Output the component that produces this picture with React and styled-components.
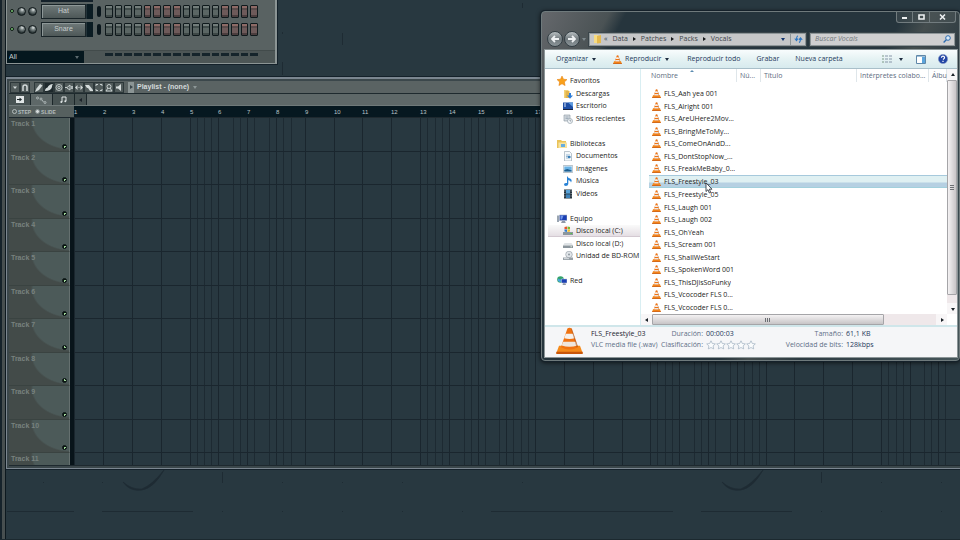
import React, { useState } from 'react';
import styled, { createGlobalStyle, css } from 'styled-components';

const GlobalStyle = createGlobalStyle`
    * {
        box-sizing: border-box;
        margin: 0;
        padding: 0;
    }
    body {
        background-color: #283840;
        overflow: hidden;
    }
    button, input, select {
        font: inherit;
        color: inherit;
        border: none;
        background: none;
    }
    a {
        color: inherit;
        text-decoration: none;
    }
    svg {
        display: block;
        flex-shrink: 0;
    }
`;

/* ---------- desktop ---------- */

const Desktop = styled.div`
    position: relative;
    display: flex;
    min-height: 100vh;
    background-color: #283840;
    border-bottom: 1px solid #1c292f;
    font-family: "Liberation Sans", Arial, sans-serif;
    font-size: 7px;
    line-height: 10px;
    overflow: hidden;
`;

const LeftEdge = styled.div`
    width: 6px;
    flex-shrink: 0;
    background-color: #474f50;
    border-left: 2px solid #16232b;
    border-right: 1px solid #0d191f;
    z-index: 1;
`;

const Workspace = styled.main`
    position: relative;
    flex: 1;
    min-width: 0;
`;

const WallpaperSvg = styled.svg`
    position: absolute;
    left: 0;
    top: 0;
`;

/* ---------- channel rack ---------- */

const Rack = styled.section`
    position: relative;
    width: 271px;
    background-color: #596262;
    border: solid #8b9494;
    border-width: 0 2px 1px 1px;
    outline: 1px solid #14212a;
    margin-bottom: 13px;
`;

const RackBody = styled.div`
    height: 51px;
    padding-left: 3px;
    border-bottom: 1px solid #424b4b;
`;

const HiddenChannel = styled.div`
    width: 52px;
    height: 2px;
    margin-left: 31px;
    background-color: #14212a;
`;

const ChannelRow = styled.div`
    display: flex;
    align-items: center;
    height: 18px;
`;

const ChannelLed = styled.button`
    width: 4px;
    height: 4px;
    margin-right: 3px;
    border-radius: 50%;
    background-color: #7fd07a;
    border: 1px solid #0c1613;
`;

const Knob = styled.span`
    width: 9px;
    height: 9px;
    margin-right: 2px;
    border-radius: 50%;
    border: 1px solid #11191b;
    background: radial-gradient(circle at 60% 25%, #dfe4e4 0, #7d8787 30%, #2c3738 70%);
`;

const ChannelName = styled.button`
    width: 45px;
    height: 15px;
    margin-left: 2px;
    color: #c6cdcd;
    background: linear-gradient(#6f7979, #4e5858);
    border: 1px solid #1a2529;
    box-shadow: inset 1px 1px 0 #8d9797;
`;

const ChannelMeter = styled.span`
    width: 7px;
    height: 15px;
    background: linear-gradient(90deg, #24343a 1px, #0b1c23 1px);
`;

const ChannelPan = styled.span`
    width: 4px;
    height: 11px;
    margin: 0 4px;
    border-radius: 2px;
    background-color: #0a161c;
`;

const Steps = styled.div`
    display: flex;
    gap: 2px;
    width: 153px;
`;

const Step = styled.button`
    flex: 1;
    height: 13px;
    border: 1px solid #0f191c;
    border-radius: 1px;
    background: ${({ $accent }) => $accent
        ? 'linear-gradient(#8d6a66 0 2px, #5b4b4b 2px 4px, #6e5a5a 4px 9px, #4b3d3e 9px)'
        : 'linear-gradient(#737d7b 0 2px, #414c4b 2px 4px, #5b6664 4px 9px, #3d4746 9px)'};
`;

const RackFooter = styled.div`
    display: flex;
    height: 12px;
    background-color: #4d5656;
`;

const FilterWrap = styled.label`
    display: flex;
    align-items: center;
    width: 77px;
    padding-right: 4px;
    color: #c6cdcd;
    background-color: #05171e;
`;

const FilterSelect = styled.select`
    flex: 1;
    padding-left: 2px;
    appearance: none;
`;

const StepMarks = styled(Steps)`
    height: 3px;
    margin: 2px 0 0 21px;
    span {
        flex: 1;
        background-color: #15242b;
    }
`;

/* ---------- playlist ---------- */

const PlaylistWindow = styled.section`
    position: relative;
    border: solid #7b8690;
    border-width: 2px 0 1px 1px;
    outline: 1px solid #14212a;
    padding: 2px 0 2px 2px;
    background-color: #3b474b;
`;

const PlaylistBar = styled.header`
    display: flex;
    align-items: center;
    height: 13px;
    padding-left: 1px;
    background-color: #5a6363;
    border-bottom: 1px solid #1e2a2e;
`;

const ToolButton = styled.button`
    width: 10px;
    height: 11px;
    color: #d3dada;
    border: 1px solid #2d383a;
    background-color: ${({ $active }) => ($active ? '#1e292c' : '#515b5b')};
    svg {
        width: 8px;
        height: 9px;
    }
`;

const ToolGroup = styled.div`
    display: flex;
    margin-right: ${({ $gap }) => $gap}px;
`;

const TitleGrip = styled.span`
    display: flex;
    align-items: center;
    justify-content: center;
    width: 6px;
    height: 11px;
    margin-right: 3px;
    background-color: #8b9595;
`;

const PlaylistTitle = styled.h1`
    font-size: 7px;
    font-weight: bold;
    color: #d5dbdb;
    margin-right: 3px;
`;

const TabBar = styled.div`
    display: flex;
    height: 12px;
    background-color: #5e6868;
    border-bottom: 1px solid #6f7979;
`;

const TabButton = styled.button`
    display: flex;
    align-items: center;
    justify-content: center;
    width: ${({ $narrow }) => ($narrow ? 12 : 22)}px;
    border-right: 1px solid #1c272a;
    color: ${({ $active }) => ($active ? '#aeb7b7' : '#e1e6e6')};
    background-color: ${({ $active }) => ($active ? '#5e6868' : '#485353')};
`;

const RulerRow = styled.div`
    display: flex;
    height: 11px;
    background-color: #061820;
`;

const ModeBox = styled.div`
    display: flex;
    align-items: center;
    gap: 4px;
    width: 65px;
    flex-shrink: 0;
    padding-left: 3px;
    font-size: 5px;
    font-weight: bold;
    color: #b4bcbc;
    background-color: #56605f;
    label {
        display: flex;
        align-items: center;
        gap: 1px;
    }
    input {
        appearance: none;
        width: 5px;
        height: 5px;
        border: 1px solid #b4bcbc;
        border-radius: 50%;
    }
    input:checked {
        background-color: #d5dbdb;
        border-color: #818b8b;
    }
`;

const barWidth = css`
    flex-shrink: 0;
    width: 29px;
    &:nth-child(5n) {
        width: 28px;
    }
`;

const Numbers = styled.div`
    display: flex;
    align-items: center;
    flex: 1;
    min-width: 0;
    overflow: hidden;
    font-size: 6px;
    color: #b9c3c6;
    span {
        ${barWidth}
    }
`;

const PlaylistBody = styled.div`
    display: flex;
    height: 349px;
    border-top: 1px solid #1e292f;
    border-bottom: 1px solid #1e292f;
    background-color: #283840;
    overflow: hidden;
`;

const trackHeight = css`
    flex-shrink: 0;
    height: 34px;
    &:nth-child(even) {
        height: 33px;
    }
`;

const TrackList = styled.ul`
    display: flex;
    flex-direction: column;
    width: 65px;
    flex-shrink: 0;
    list-style: none;
    border-right: 4px solid #08141a;
`;

const TrackHead = styled.li`
    ${trackHeight}
    display: flex;
    flex-direction: column;
    justify-content: space-between;
    padding: 1px 2px 2px;
    font-weight: bold;
    color: #78827f;
    border-bottom: 1px solid #3a4341;
    background: radial-gradient(ellipse 40px 30px at 62px 2px, #4c5a59 0 95%, #434b49 100%);
    border-right: 1px solid #65706f;
`;

const TrackLed = styled.button`
    align-self: flex-end;
    width: 5px;
    height: 5px;
    border: 1px solid #0a1412;
    border-radius: 50%;
    background: radial-gradient(circle, #9fd89a 0 1px, #0a1412 1px);
`;

const Grid = styled.div`
    display: grid;
    flex: 1;
    min-width: 0;
    overflow: hidden;
`;

const Bars = styled.div`
    grid-area: 1 / 1;
    display: flex;
    min-width: 0;
`;

const Bar = styled.div`
    ${barWidth}
    display: flex;
    border-left: 1px solid #1a262e;
`;

const Beat = styled.span`
    flex: 1;
    border-left: 1px solid ${({ $hidden }) => ($hidden ? 'transparent' : '#1d2a32')};
    &:first-child {
        border-left: none;
    }
`;

const Lanes = styled.div`
    grid-area: 1 / 1;
    display: flex;
    flex-direction: column;
    min-width: 0;
`;

const Lane = styled.div`
    ${trackHeight}
    border-bottom: 1px solid #1a262e;
`;

/* ---------- explorer ---------- */

const ExplorerWindow = styled.section`
    position: absolute;
    left: 541px;
    top: 11px;
    right: 0;
    display: flex;
    flex-direction: column;
    padding: 0 2px 3px 3px;
    border: 1px solid #6f7a7c;
    border-radius: 4px;
    background: linear-gradient(118deg, #65686c 0, #4a5254 60px, #26353d 75px, #26353d 320px, #444d4e 345px, #2c3a41 390px, #46565a 100%);
    box-shadow: 0 0 0 1px #15212a, 0 1px 4px 1px rgba(0, 0, 0, 0.6);
    font-family: "Open Sans", "Segoe UI", sans-serif;
    font-size: 7px;
    line-height: 12px;
    color: #1c1c22;
`;

const CaptionRow = styled.div`
    display: flex;
    justify-content: flex-end;
    height: 18px;
    padding-right: 1px;
`;

const CaptionButton = styled.button`
    display: flex;
    align-items: center;
    justify-content: center;
    width: ${({ $wide }) => ($wide ? 26 : 17)}px;
    height: 11px;
    color: #eef1f2;
    border: 1px solid #727c7f;
    border-width: 0 1px 1px 0;
    background-color: rgba(80, 90, 92, 0.4);
    &:first-child {
        border-left-width: 1px;
        border-bottom-left-radius: 3px;
    }
    &:last-child {
        border-bottom-right-radius: 3px;
    }
`;

const AddressRow = styled.div`
    display: flex;
    align-items: center;
    height: 20px;
    padding: 0 2px 2px;
`;

const NavButton = styled.button`
    width: 16px;
    height: 16px;
    margin-right: 1px;
    border-radius: 50%;
    border: 1px solid #343f45;
    background: linear-gradient(#b9c0c3, #70797d 50%, #8a9498);
    svg {
        margin: 0 auto;
    }
`;

const AddressBar = styled.nav`
    display: flex;
    align-items: center;
    flex: 1;
    min-width: 0;
    height: 13px;
    margin: 0 4px 0 2px;
    padding-left: 3px;
    color: #3d4448;
    background-color: #c6c7c8;
    border: 1px solid #8e9698;
    outline: 1px solid #3a454a;
`;

const Crumb = styled.a`
    margin-left: 5px;
    &:first-of-type {
        margin-left: 2px;
    }
`;

const CrumbArrow = styled.span`
    width: 0;
    margin-left: 5px;
    border: solid transparent;
    border-width: 2px 0 2px 3px;
    border-left-color: #16191b;
`;

const Refresh = styled.button`
    display: flex;
    align-items: center;
    justify-content: center;
    width: 15px;
    height: 11px;
    margin-left: 4px;
    border-left: 1px solid #8e9698;
`;

const SearchBox = styled.label`
    display: flex;
    align-items: center;
    width: 145px;
    height: 13px;
    padding: 0 3px 0 4px;
    background-color: #cfcfd0;
    border: 1px solid #8e9698;
    outline: 1px solid #3a454a;
    input {
        flex: 1;
        min-width: 0;
        font-style: italic;
        outline: none;
    }
    input::placeholder {
        color: #73797c;
    }
`;

const Client = styled.div`
    background-color: #fff;
    outline: 1px solid #8b9597;
`;

const CommandBar = styled.div`
    display: flex;
    align-items: center;
    height: 19px;
    padding: 0 9px 0 11px;
    color: #1e395b;
    background: linear-gradient(#f8fcfd, #e5f2f3 50%, #d7eaee);
    border-bottom: 1px solid #a9bfc9;
`;

const Command = styled.button`
    display: flex;
    align-items: center;
    margin-right: ${({ $gap = 16 }) => $gap}px;
    gap: 3px;
`;

const Spacer = styled.span`
    flex: 1;
`;

const Down = styled.span`
    width: 0;
    margin: 1px 1px 0;
    border: solid transparent;
    border-width: 3px 2px 0;
    border-top-color: ${({ $color = '#1e2c40' }) => $color};
`;

const Panes = styled.div`
    display: flex;
    height: 256px;
`;

const Sidebar = styled.ul`
    width: 96px;
    flex-shrink: 0;
    padding: 6px 0 0 3px;
    list-style: none;
    border-right: 1px solid #d9eef2;
    overflow: hidden;
`;

const SideItem = styled.li`
    height: 12px;
    &:nth-child(even) {
        height: 13px;
    }
    a {
        display: flex;
        align-items: center;
        gap: 3px;
        height: 100%;
        padding-left: ${({ $child }) => ($child ? 15 : 9)}px;
        white-space: nowrap;
        ${({ $selected }) => $selected && css`
            background: linear-gradient(#fafafa, #e5dfe4);
            border-bottom: 1px solid #d3c9d1;
        `}
    }
`;

const ListPane = styled.div`
    display: grid;
    grid-template-columns: 1fr 10px;
    grid-template-rows: 1fr 11px;
    flex: 1;
    min-width: 0;
`;

const TableWrap = styled.div`
    padding-left: 8px;
    overflow: hidden;
`;

const FileTable = styled.table`
    width: 100%;
    table-layout: fixed;
    border-collapse: collapse;
    th {
        height: 18px;
        padding: 1px 0 5px 3px;
        font-weight: normal;
        text-align: left;
        color: #5d6c80;
        white-space: nowrap;
        overflow: hidden;
        text-overflow: ellipsis;
        background: linear-gradient(#dfe6ea, #dfe6ea) right top / 1px 13px no-repeat;
    }
    th:first-child {
        padding-left: 2px;
        text-overflow: clip;
    }
    th:last-child {
        text-overflow: clip;
    }
`;

const FileRow = styled.tr`
    height: 13px;
    line-height: 11px;
    cursor: default;
    &:nth-child(even) {
        height: 12px;
    }
    &:nth-child(8) {
        height: 13px;
    }
    td {
        height: inherit;
        ${({ $selected }) => $selected && css`
            background: linear-gradient(#dff0f2 0 7px, #b6d0e2 8px);
            box-shadow: inset 0 1px 0 #a6c9dc, inset 0 -1px 0 #a2d0dc;
        `}
    }
    div {
        display: flex;
        align-items: center;
        gap: 3px;
        height: 12px;
        padding-left: 3px;
    }
    span {
        overflow: hidden;
        text-overflow: ellipsis;
        white-space: nowrap;
    }
`;

const SortMark = styled.span`
    display: block;
    width: 0;
    height: 0;
    margin: 0 0 -2px 39px;
    border: solid transparent;
    border-width: 0 2px 2px;
    border-bottom-color: #5b8bb0;
`;

const Scroll = styled.div`
    display: flex;
    flex-direction: ${({ $vertical }) => ($vertical ? 'column' : 'row')};
    background-color: #efe8ea;
`;

const ScrollArrow = styled.button`
    display: flex;
    align-items: center;
    justify-content: center;
    width: 11px;
    height: 11px;
    flex-shrink: 0;
    background-color: #f8f6f7;
    svg {
        transform: rotate(${({ $turn = 0 }) => $turn}deg);
    }
`;

const Thumb = styled.div`
    display: flex;
    align-items: center;
    justify-content: center;
    flex: ${({ $size }) => $size};
    border: 1px solid #a5a5a8;
    border-radius: 1px;
    background: linear-gradient(${({ $vertical }) => ($vertical ? '90deg' : '180deg')}, #f4f2f3, #c8c5c7);
    svg {
        transform: rotate(${({ $vertical }) => ($vertical ? 90 : 0)}deg);
    }
`;

const Track = styled.span`
    flex: ${({ $size }) => $size};
`;

const Details = styled.footer`
    display: flex;
    height: 32px;
    padding-left: 11px;
    background-color: #f5f6f8;
    border-top: 2px solid #cfe6ea;
`;

const FileSummary = styled.div`
    width: 69px;
    margin: 1px 0 0 8px;
    line-height: 11px;
    white-space: nowrap;
    color: #5e6f87;
    strong {
        display: block;
        font-weight: normal;
        color: #1c2430;
    }
`;

const Facts = styled.dl`
    display: grid;
    grid-template-columns: ${({ $label }) => $label}px auto;
    grid-auto-rows: 11px;
    column-gap: 3px;
    align-content: start;
    margin: 1px 0 0;
    line-height: 11px;
    white-space: nowrap;
    dt {
        text-align: right;
        color: #5e6f87;
    }
    dd {
        display: flex;
        align-items: center;
        color: #1e395b;
    }
`;

const Star = styled.button`
    width: 10px;
    height: 10px;
`;

const Cursor = styled.svg`
    position: absolute;
    left: 705px;
    top: 182px;
`;

/* ---------- icons ---------- */

const Cone = ({ size = 9 }) => (
    <svg width={size} height={size} viewBox="0 0 18 18">
        <path d="M2 12.500h14l1.800 5H.2z" fill="#f58a1a" />
        <path d="M.2 16.500h17.600V18H.2z" fill="#c9560a" />
        <path d="M7.600 1q1.400-1 2.800 0l4.300 12.500q-5.700 3-11.400 0z" fill="#f07312" />
        <path d="M6.500 4.500h5l1 3q-3.500 1-7 0z" fill="#f6f1ec" />
        <path d="M4.700 9.800h8.600l.9 2.500q-5.200 1.800-10.400 0z" fill="#efe6dc" />
        <path d="M10 1l3.700 12.500 1-.4L10.600 1z" fill="#a84a0c" opacity=".5" />
    </svg>
);

const sideIcons = {
    star: <path d="M5 0l1.500 3.200 3.500.4-2.600 2.400.7 3.600L5 7.800 1.900 9.600l.7-3.600L0 3.600l3.500-.4z" fill="#f9a01b" stroke="#e27a08" strokeWidth=".5" />,
    download: <><path d="M1 1h4l1 1v7H1z" fill="#f3d377" /><path d="M2.500 2h4v7h-4z" fill="#e4b54c" /><path d="M6 4h2v2.500h2L7 9.800 4 6.500h2z" fill="#2f7ed8" /></>,
    desktop: <><path d="M0 1.500h10v7.500H0z" fill="#1f4fa5" /><path d="M5 1.500h5V6z" fill="#5d9be0" /><path d="M1 2.500h2v1H1zM1 4.500h2v1H1z" fill="#dbe8fa" /><path d="M0 8h10v1H0z" fill="#1a2440" /></>,
    recent: <><path d="M1 1h6v6H1z" fill="#d4dbe0" stroke="#8695a0" strokeWidth=".6" /><path d="M2.500 3h3M2.500 4.500h3" stroke="#7f92a3" strokeWidth=".6" /><circle cx="7" cy="7" r="2.500" fill="#f2f6f9" stroke="#8695a0" strokeWidth=".6" /><path d="M7 5.600V7h1.200" stroke="#456" strokeWidth=".5" fill="none" /></>,
    library: <><path d="M0 1h4l1 1h4v7H0z" fill="#eac35a" /><path d="M1.500 3.500H10V9H1.500z" fill="#f7e3a0" /><path d="M4 5h4v3H4z" fill="#67aee0" /></>,
    document: <><path d="M1.500.5h5l2 2V10h-7z" fill="#f6f9fb" stroke="#8fa0ad" strokeWidth=".6" /><path d="M3 4h4M3 5.500h2M3 7h4" stroke="#6f9cc0" strokeWidth=".7" /><path d="M5 5h2.500v2H5z" fill="#3a7fb8" /></>,
    image: <><path d="M.3 1.500h9.400v7H.3z" fill="#f2f5f7" stroke="#8fa0ad" strokeWidth=".6" /><path d="M1.300 2.500h7.400v5H1.300z" fill="#69b3e6" /><path d="M1.300 7.500V6l3-1 4.400 1.500v1z" fill="#1c5c8d" /></>,
    music: <path d="M4 0q1 2 3.500 2.800Q9.500 4 8 6.500 8 4.500 5.300 4v4q-.3 2-2.500 2Q.8 9.800 1 8.200 1.500 6.600 4 7z" fill="#2a83d6" />,
    video: <><path d="M1 .5h8v9H1z" fill="#26343f" /><path d="M3 1h4v3.600H3z" fill="#58a2d8" /><path d="M3 5.400h4V9H3z" fill="#3d82b8" /><path d="M1.500 1.500h.8v1h-.8zM1.500 4h.8v1h-.8zM1.500 6.500h.8v1h-.8zM7.700 1.500h.8v1h-.8zM7.700 4h.8v1h-.8zM7.700 6.500h.8v1h-.8z" fill="#c7d0d6" /></>,
    computer: <><path d="M0 1.500h2V8H0z" fill="#9aa5b1" /><path d="M2.500 1H10v5.500H2.500z" fill="#1b3fb3" stroke="#aab4c4" strokeWidth=".6" /><path d="M3.500 1.500h3L5 5.500H3.500z" fill="#6f94ea" /><path d="M5 7h3l.8 2H4z" fill="#8f99a8" /></>,
    system: <><path d="M0 6h10v3H0z" fill="#8c969d" /><path d="M7.500 7h1.500v1H7.500z" fill="#4fd03c" /><path d="M1.500 1L4 .6v2.600H1.500z" fill="#e8552d" /><path d="M4.500.5L7 1v2.200H4.500z" fill="#7dba32" /><path d="M1.500 3.600H4V6L1.500 5.600z" fill="#2f7dd4" /><path d="M4.500 3.600H7v2L4.500 6z" fill="#f4bd23" /></>,
    drive: <><path d="M1.500 4h7L10 6.500H0z" fill="#dfe3e6" /><path d="M0 6.500h10V9H0z" fill="#8c969d" /><path d="M7.500 7.300h1.500v1H7.500z" fill="#d9e9d5" /></>,
    disc: <><circle cx="6" cy="3.500" r="3.300" fill="#e2e6ea" stroke="#8d979f" strokeWidth=".6" /><circle cx="6" cy="3.500" r="1" fill="#8d979f" /><path d="M0 6.500h10V9H0z" fill="#98a1a8" /><path d="M1 7.300h5v.8H1z" fill="#e6eaec" /></>,
    network: <><circle cx="3.500" cy="3.500" r="3.300" fill="#35a36b" /><path d="M1 2.500q2.500 2 5-.5v3Q3.500 7 1 5z" fill="#4aa5e6" /><path d="M4.500 3H10v4H4.500z" fill="#1b3fb3" stroke="#c0c9d6" strokeWidth=".5" /><path d="M6 7.300h2.500L9 9H5.500z" fill="#8f99a8" /></>,
};

const SideIcon = ({ name }) => (
    <svg width="10" height="10" viewBox="0 0 10 10">{sideIcons[name]}</svg>
);

const toolIcons = [
    <path d="M0 9l1.500-3.500L5 1l2.500 1.500L4 7z" fill="currentColor" />,
    <path d="M0 8q0-3 2.500-3.500Q4 1 8 1 7 2 7 4 6 8 0 8z M5 2v2" fill="currentColor" />,
    <g fill="none" stroke="currentColor" strokeWidth=".8"><circle cx="4" cy="4.500" r="3" /><circle cx="4" cy="4.500" r="1.200" /></g>,
    <g fill="none" stroke="currentColor" strokeWidth=".9"><path d="M0 4.500h2L5 2v5L2 5" /><path d="M6 3l2 3M8 3L6 6" /></g>,
    <path d="M0 4.500L2.500 2v5zM8 4.500L5.500 2v5zM3.500 4h1v1h-1z" fill="currentColor" />,
    <path d="M0 2h4l4 5v1H5L3 5H2z" fill="currentColor" />,
    <path d="M1 3V1.500h2M5 1.500h2V3M7 6v1.500H5M3 7.500H1V6" fill="none" stroke="currentColor" strokeWidth=".9" />,
    <g fill="none" stroke="currentColor" strokeWidth=".9"><circle cx="4" cy="3.500" r="2" /><path d="M1 8l2-3M7 8L5 5M1 8h6" /></g>,
    <path d="M1 3.500h2L6 1v7L3 5.500H1z" fill="currentColor" />,
];

const Wallpaper = () => (
    <WallpaperSvg width="954" height="540" viewBox="6 0 954 540" fill="none" stroke="#1e2b33">
        {[123, 722].map((x) => (
            <path key={x} d={`M${x} 482q9 8 19 7q10-4 22-19q-10 18-22 20q-12 2-19-8z`} fill="#1e2b33" strokeWidth=".7" />
        ))}
        <path d="M7 511.500h67M102 511.500h91M491 511.500h182M701 511.500h91" />
        <path d="M222.500 472v11M821.500 472v11M282.500 62v13M342.500 33v12M282.500 32v2M522.500 3v5" />
        <path d="M43 482.500h1M102 482.500h1M282 482.500h1M342 482.500h1M402 482.500h1M522 482.500h1M881 482.500h1M941 482.500h1M222 511.500h1M282 511.500h1M342 511.500h1M402 511.500h1M462 511.500h1M821 511.500h1M881 511.500h1M941 511.500h1" />
    </WallpaperSvg>
);

const MiniArrow = () => (
    <svg width="4" height="4" viewBox="0 0 4 4"><path d="M3 0v4L0 2z" fill="#1b2228" /></svg>
);

const Grip = () => (
    <svg width="6" height="4" viewBox="0 0 6 4"><path d="M.5 0v4M2.500 0v4M4.500 0v4" stroke="#6c6f73" /></svg>
);

/* ---------- data ---------- */

const channels = ['Hat', 'Snare'];
const tracks = Array.from({ length: 11 }, (_, i) => `Track ${i + 1}`);
const bars = Array.from({ length: 31 }, (_, i) => i + 1);
const numberedBars = bars.slice(0, 17);

const sideEntries = [
    { icon: 'star', text: 'Favoritos' },
    { icon: 'download', text: 'Descargas', child: true },
    { icon: 'desktop', text: 'Escritorio', child: true },
    { icon: 'recent', text: 'Sitios recientes', child: true },
    null,
    { icon: 'library', text: 'Bibliotecas' },
    { icon: 'document', text: 'Documentos', child: true },
    { icon: 'image', text: 'Imágenes', child: true },
    { icon: 'music', text: 'Música', child: true },
    { icon: 'video', text: 'Vídeos', child: true },
    null,
    { icon: 'computer', text: 'Equipo' },
    { icon: 'system', text: 'Disco local (C:)', child: true, selected: true },
    { icon: 'drive', text: 'Disco local (D:)', child: true },
    { icon: 'disc', text: 'Unidad de BD-ROM', child: true },
    null,
    { icon: 'network', text: 'Red' },
];

const files = [
    'FLS_Aah yea 001', 'FLS_Alright 001', 'FLS_AreUHere2Mov...', 'FLS_BringMeToMy...',
    'FLS_ComeOnAndD...', 'FLS_DontStopNow_...', 'FLS_FreakMeBaby_0...', 'FLS_Freestyle_03',
    'FLS_Freestyle_05', 'FLS_Laugh 001', 'FLS_Laugh 002', 'FLS_OhYeah', 'FLS_Scream 001',
    'FLS_ShallWeStart', 'FLS_SpokenWord 001', 'FLS_ThisDJisSoFunky', 'FLS_Vcocoder FLS 0...',
    'FLS_Vcocoder FLS 0...',
];

// every second group of four bars shows its beats
const isDense = (bar) => Math.floor((bar - 1) / 4) % 2 === 1;

const beatHidden = (bar, beat) => {
    const pos = ((bar - 1) % 4) * 4 + beat;
    return pos === 5 || pos === 10 || (pos === 15 && bar < 9);
};

/* ---------- parts ---------- */

function ChannelRack() {
    return (
        <Rack>
            <RackBody>
                <HiddenChannel />
                {channels.map((name) => (
                    <ChannelRow key={name}>
                        <ChannelLed aria-label={`${name} on`} />
                        <Knob />
                        <Knob />
                        <ChannelName>{name}</ChannelName>
                        <ChannelMeter />
                        <ChannelPan />
                        <Steps>
                            {Array.from({ length: 16 }, (_, i) => (
                                <Step key={i} $accent={Math.floor(i / 4) % 2 === 1} aria-label={`${name} ${i + 1}`} />
                            ))}
                        </Steps>
                    </ChannelRow>
                ))}
            </RackBody>
            <RackFooter>
                <FilterWrap>
                    <FilterSelect aria-label="Filter">
                        <option>All</option>
                    </FilterSelect>
                    <Down $color="#5d6a6e" />
                </FilterWrap>
                <StepMarks>
                    {Array.from({ length: 16 }, (_, i) => <span key={i} />)}
                </StepMarks>
            </RackFooter>
        </Rack>
    );
}

function Playlist() {
    return (
        <PlaylistWindow>
            <PlaylistBar>
                <ToolGroup $gap={4}>
                    <ToolButton aria-label="Menu">
                        <svg viewBox="0 0 8 9"><path d="M2 3.500h4L4 6z" fill="currentColor" /></svg>
                    </ToolButton>
                    <ToolButton aria-label="Snap">
                        <svg viewBox="0 0 8 9"><path d="M2 8V4q0-2 2-2t2 2v4" fill="none" stroke="currentColor" strokeWidth="1.500" /></svg>
                    </ToolButton>
                </ToolGroup>
                <ToolGroup $gap={4}>
                    {toolIcons.map((icon, i) => (
                        <ToolButton key={i} $active={i === 1} aria-label={`Tool ${i + 1}`}>
                            <svg viewBox="0 0 8 9">{icon}</svg>
                        </ToolButton>
                    ))}
                </ToolGroup>
                <TitleGrip>
                    <svg width="3" height="4" viewBox="0 0 3 4"><path d="M0 0l3 2-3 2z" fill="#39454a" /></svg>
                </TitleGrip>
                <PlaylistTitle>Playlist - (none)</PlaylistTitle>
                <Down $color="#8d9797" />
            </PlaylistBar>
            <TabBar>
                <TabButton aria-label="Clips">
                    <svg width="8" height="7" viewBox="0 0 8 7"><path d="M0 0h8v7H0z" fill="currentColor" /><path d="M1 3h2.500V1.500L6 3.500 3.500 5.500V4H1z" fill="#1c272a" /></svg>
                </TabButton>
                <TabButton $active aria-label="Automation">
                    <svg width="11" height="8" viewBox="0 0 11 8" fill="none" stroke="currentColor"><circle cx="1.500" cy="2" r="1" /><circle cx="5" cy="3" r="1" /><path d="M6 4l1.500 2" /><circle cx="9" cy="6.500" r="1" /></svg>
                </TabButton>
                <TabButton aria-label="Notes">
                    <svg width="7" height="7" viewBox="0 0 7 7"><path d="M2 6V1h4v4" fill="none" stroke="currentColor" /><circle cx="1.300" cy="6" r="1" fill="currentColor" /><circle cx="5.300" cy="5.300" r="1" fill="currentColor" /></svg>
                </TabButton>
                <TabButton $narrow aria-label="Scroll left"><MiniArrow /></TabButton>
            </TabBar>
            <RulerRow>
                <ModeBox>
                    <label><input type="radio" name="mode" />STEP</label>
                    <label><input type="radio" name="mode" defaultChecked />SLIDE</label>
                </ModeBox>
                <Numbers>
                    {numberedBars.map((n) => <span key={n}>{n}</span>)}
                </Numbers>
            </RulerRow>
            <PlaylistBody>
                <TrackList>
                    {tracks.map((name) => (
                        <TrackHead key={name}>
                            {name}
                            <TrackLed aria-label={`${name} on`} />
                        </TrackHead>
                    ))}
                </TrackList>
                <Grid>
                    <Bars>
                        {bars.map((bar) => (
                            <Bar key={bar}>
                                {isDense(bar) && [0, 1, 2, 3].map((beat) => (
                                    <Beat key={beat} $hidden={beatHidden(bar, beat)} />
                                ))}
                            </Bar>
                        ))}
                    </Bars>
                    <Lanes>
                        {tracks.map((name) => <Lane key={name} />)}
                    </Lanes>
                </Grid>
            </PlaylistBody>
        </PlaylistWindow>
    );
}

function AddressLine() {
    return (
        <AddressRow>
            <NavButton aria-label="Atrás">
                <svg width="10" height="10" viewBox="0 0 10 10"><path d="M9 5H2M5 2L2 5l3 3" fill="none" stroke="#eef1f3" strokeWidth="1.800" /></svg>
            </NavButton>
            <NavButton aria-label="Adelante">
                <svg width="10" height="10" viewBox="0 0 10 10"><path d="M1 5h7M5 2l3 3-3 3" fill="none" stroke="#eef1f3" strokeWidth="1.800" /></svg>
            </NavButton>
            <Down $color="#7e898d" />
            <AddressBar>
                <svg width="9" height="10" viewBox="0 0 9 10"><path d="M1 1h4v8H1z" fill="#f6dc84" /><path d="M4 2l4-1v8l-4 .5z" fill="#e5b94d" /></svg>
                <Crumb href="#">«</Crumb>
                <Crumb href="#">Data</Crumb>
                <CrumbArrow />
                <Crumb href="#">Patches</Crumb>
                <CrumbArrow />
                <Crumb href="#">Packs</Crumb>
                <CrumbArrow />
                <Crumb href="#">Vocals</Crumb>
                <Spacer />
                <Down $color="#12356e" />
                <Refresh aria-label="Actualizar">
                    <svg width="9" height="8" viewBox="0 0 9 8" fill="none" stroke="#2c77c4" strokeWidth="1.100"><path d="M4 1Q2.500 1 2.500 5M.8 3.500L2.500 5.500 4 3.500M5 7.500Q6.500 7 6.500 3M4.900 4.800L6.500 2.800 8.200 4.800" /></svg>
                </Refresh>
            </AddressBar>
            <SearchBox>
                <input type="text" placeholder="Buscar Vocals" aria-label="Buscar Vocals" />
                <svg width="8" height="8" viewBox="0 0 8 8" fill="none" stroke="#2c6cb0"><circle cx="5" cy="3" r="2.300" fill="#dcebf7" /><path d="M3.300 4.700L.6 7.400" strokeWidth="1.400" /></svg>
            </SearchBox>
        </AddressRow>
    );
}

function Commands() {
    return (
        <CommandBar>
            <Command>Organizar <Down /></Command>
            <Command $gap={17}><Cone />Reproducir <Down /></Command>
            <Command>Reproducir todo</Command>
            <Command>Grabar</Command>
            <Command>Nueva carpeta</Command>
            <Spacer />
            <Command $gap={12} aria-label="Vista">
                <svg width="10" height="8" viewBox="0 0 10 8"><path d="M0 1h2M0 4h2M0 7h2" stroke="#7a9a86" /><path d="M3 1h3M7 1h3M3 4h3M7 4h3M3 7h3M7 7h3" stroke="#8796a8" /></svg>
                <Spacer />
                <Down />
            </Command>
            <Command $gap={12} aria-label="Panel de vista previa">
                <svg width="10" height="9" viewBox="0 0 10 9"><path d="M.5.5h9v8h-9z" fill="#fff" stroke="#5f87a8" /><path d="M6 1h3v7H6z" fill="#5ba4dc" /><path d="M1 1h8v1H1z" fill="#9fc0d8" /></svg>
            </Command>
            <Command $gap={0} aria-label="Ayuda">
                <svg width="10" height="10" viewBox="0 0 10 10"><circle cx="5" cy="5" r="4.600" fill="#2245a5" stroke="#7f93c2" strokeWidth=".6" /><path d="M3.400 3.800Q3.600 2.200 5 2.200t1.600 1.400Q6.600 4.500 5 5.600M5 6.800v1.200" fill="none" stroke="#fff" strokeWidth="1.200" /></svg>
            </Command>
        </CommandBar>
    );
}

function FileList({ selected, onSelect }) {
    return (
        <TableWrap>
            <FileTable>
                <colgroup>
                    <col width="88" />
                    <col width="24" />
                    <col width="96" />
                    <col width="72" />
                    <col />
                </colgroup>
                <thead>
                    <tr>
                        <th><SortMark />Nombre</th>
                        <th>Nú...</th>
                        <th>Título</th>
                        <th>Intérpretes colabo...</th>
                        <th>Álbu</th>
                    </tr>
                </thead>
                <tbody>
                    {files.map((file, i) => (
                        <FileRow key={i} $selected={i === selected} onClick={() => onSelect(i)}>
                            <td><div><Cone /><span>{file}</span></div></td>
                            <td /><td /><td /><td />
                        </FileRow>
                    ))}
                </tbody>
            </FileTable>
        </TableWrap>
    );
}

function Explorer() {
    const [selected, setSelected] = useState(7);

    return (
        <ExplorerWindow>
            <CaptionRow>
                <CaptionButton aria-label="Minimizar">
                    <svg width="7" height="6" viewBox="0 0 7 6"><path d="M1 4h5" stroke="currentColor" strokeWidth="2" /></svg>
                </CaptionButton>
                <CaptionButton aria-label="Maximizar">
                    <svg width="7" height="6" viewBox="0 0 7 6"><path d="M1 1h5v4H1z" fill="none" stroke="currentColor" strokeWidth="1.600" /></svg>
                </CaptionButton>
                <CaptionButton $wide aria-label="Cerrar">
                    <svg width="7" height="6" viewBox="0 0 7 6"><path d="M1 .5l5 5M6 .5l-5 5" stroke="currentColor" strokeWidth="1.500" /></svg>
                </CaptionButton>
            </CaptionRow>
            <AddressLine />
            <Client>
                <Commands />
                <Panes>
                    <Sidebar>
                        {sideEntries.map((entry, i) => (
                            <SideItem key={i} $child={entry?.child} $selected={entry?.selected}>
                                {entry && <a href="#"><SideIcon name={entry.icon} />{entry.text}</a>}
                            </SideItem>
                        ))}
                    </Sidebar>
                    <ListPane>
                        <FileList selected={selected} onSelect={setSelected} />
                        <Scroll $vertical>
                            <ScrollArrow $turn={90} aria-label="Arriba"><MiniArrow /></ScrollArrow>
                            <Thumb $vertical $size={214}><Grip /></Thumb>
                            <Track $size={8} />
                            <ScrollArrow $turn={-90} aria-label="Abajo"><MiniArrow /></ScrollArrow>
                        </Scroll>
                        <Scroll>
                            <ScrollArrow aria-label="Izquierda"><MiniArrow /></ScrollArrow>
                            <Thumb $size={231}><Grip /></Thumb>
                            <Track $size={52} />
                            <ScrollArrow $turn={180} aria-label="Derecha"><MiniArrow /></ScrollArrow>
                        </Scroll>
                    </ListPane>
                </Panes>
                <Details>
                    <Cone size={27} />
                    <FileSummary>
                        <strong>{files[selected]}</strong>
                        VLC media file (.wav)
                    </FileSummary>
                    <Facts $label={43}>
                        <dt>Duración:</dt>
                        <dd>00:00:03</dd>
                        <dt>Clasificación:</dt>
                        <dd>
                            {[1, 2, 3, 4, 5].map((n) => (
                                <Star key={n} aria-label={`${n}`}>
                                    <svg width="10" height="10" viewBox="0 0 10 10"><path d="M5 .8l1.300 2.700 3 .4-2.200 2 .6 3L5 7.500 2.300 8.900l.6-3-2.200-2 3-.4z" fill="#fafcfd" stroke="#9fb0c0" strokeWidth=".7" /></svg>
                                </Star>
                            ))}
                        </dd>
                    </Facts>
                    <Facts $label={87}>
                        <dt>Tamaño:</dt>
                        <dd>61,1 KB</dd>
                        <dt>Velocidad de bits:</dt>
                        <dd>128kbps</dd>
                    </Facts>
                </Details>
            </Client>
        </ExplorerWindow>
    );
}

export default function App() {
    return (
        <>
            <GlobalStyle />
            <Desktop>
                <LeftEdge />
                <Workspace>
                    <Wallpaper />
                    <ChannelRack />
                    <Playlist />
                </Workspace>
                <Explorer />
                <Cursor width="8" height="12" viewBox="0 0 8 12">
                    <path d="M1 .8v8.700l2-1.800 1.300 3.300 1.400-.6L4.400 7.200H7z" fill="#fff" stroke="#1c2430" strokeWidth=".8" />
                </Cursor>
            </Desktop>
        </>
    );
}
